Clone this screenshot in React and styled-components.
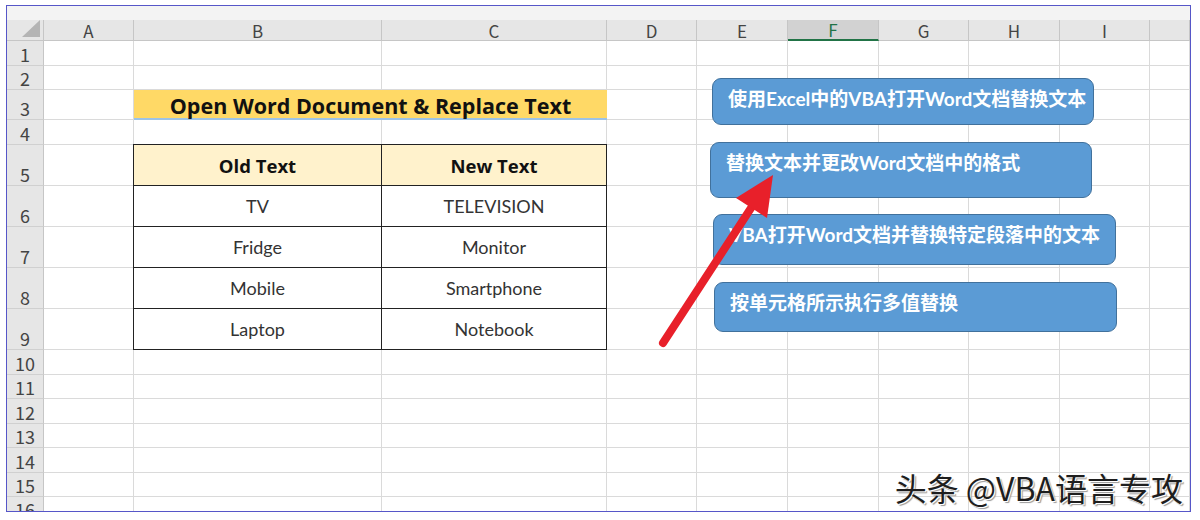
import React from "react";
import styled, { createGlobalStyle } from "styled-components";

const GlobalStyle = createGlobalStyle`
  html, body {
    margin: 0;
    padding: 0;
    background: #ffffff;
  }
  body {
    font-family: "Lato", "Noto Sans CJK SC", sans-serif;
  }
`;

const columns = [
  { name: "A", width: 90 },
  { name: "B", width: 248 },
  { name: "C", width: 225 },
  { name: "D", width: 90 },
  { name: "E", width: 91 },
  { name: "F", width: 91 },
  { name: "G", width: 90 },
  { name: "H", width: 91 },
  { name: "I", width: 90 },
  { name: "", width: 40 },
];

const rowHeights = [25, 24, 30, 25, 41, 41, 41, 41, 41, 24.5, 24.5, 24.5, 24.5, 24.5, 24.5, 24];

const tableRows = [
  ["TV", "TELEVISION"],
  ["Fridge", "Monitor"],
  ["Mobile", "Smartphone"],
  ["Laptop", "Notebook"],
];

const shapes = [
  { text: "使用Excel中的VBA打开Word文档替换文本", x: 712, y: 78, w: 382, h: 47 },
  { text: "替换文本并更改Word文档中的格式", x: 710, y: 142, w: 382, h: 56 },
  { text: "VBA打开Word文档并替换特定段落中的文本", x: 713, y: 214, w: 403, h: 51 },
  { text: "按单元格所示执行多值替换", x: 714, y: 282, w: 403, h: 50 },
];

const App = () => {
  return (
    <>
      <GlobalStyle />
      <Frame>
        <TopStrip />
        <SheetGrid>
          <CornerCell>
            <svg width="18" height="17" viewBox="0 0 18 17">
              <polygon points="18,0 18,17 0,17" fill="#b4b4b4" />
            </svg>
          </CornerCell>
          {columns.map((col, i) => (
            <ColHeader key={i} $col={i + 2} $selected={col.name === "F"}>
              {col.name}
            </ColHeader>
          ))}
          {rowHeights.map((_, r) => (
            <React.Fragment key={r}>
              <RowHeader $row={r + 2}>{r + 1}</RowHeader>
              {columns.map((col, c) => (
                <Cell key={c} $row={r + 2} $col={c + 2} />
              ))}
            </React.Fragment>
          ))}

          <TitleCell>Open Word Document &amp; Replace Text</TitleCell>

          <DataTable>
            <HeadCell>Old Text</HeadCell>
            <HeadCell>New Text</HeadCell>
            {tableRows.map(([oldText, newText], i) => (
              <React.Fragment key={i}>
                <BodyCell>{oldText}</BodyCell>
                <BodyCell>{newText}</BodyCell>
              </React.Fragment>
            ))}
          </DataTable>
        </SheetGrid>

        {shapes.map((s, i) => (
          <Shape
            key={i}
            style={{ left: s.x - 7, top: s.y - 6, width: s.w, height: s.h }}
          >
            {s.text}
          </Shape>
        ))}

        <ArrowLayer viewBox="7 6 1183 505" width="1183" height="505">
          <line
            x1="663"
            y1="343"
            x2="753"
            y2="205"
            stroke="#e8202a"
            strokeWidth="8"
            strokeLinecap="round"
          />
          <polygon points="773,175 736,198 767,218" fill="#e8202a" />
        </ArrowLayer>

        <Watermark>头条 @VBA语言专攻</Watermark>
      </Frame>
    </>
  );
};

const Frame = styled.div`
  position: relative;
  margin: 5px 0 0 6px;
  width: 1183px;
  height: 505px;
  border: 1px solid #5656c8;
  overflow: hidden;
  background: #ffffff;
`;

const TopStrip = styled.div`
  height: 14px;
  background: #f3f3f3;
`;

const SheetGrid = styled.div`
  display: grid;
  grid-template-columns: 37px ${columns.map((c) => `${c.width}px`).join(" ")};
  grid-template-rows: 21px ${rowHeights.map((h) => `${h}px`).join(" ")};
`;

const CornerCell = styled.div`
  grid-row: 1;
  grid-column: 1;
  background: #e6e6e6;
  border-right: 1px solid #c6c6c6;
  border-bottom: 1px solid #c6c6c6;
  display: flex;
  align-items: flex-end;
  justify-content: flex-end;
  padding: 0 3px 3px 0;
  box-sizing: border-box;
`;

const ColHeader = styled.div`
  grid-row: 1;
  grid-column: ${({ $col }) => $col};
  background: ${({ $selected }) => ($selected ? "#d2d2d2" : "#e6e6e6")};
  border-right: 1px solid #c6c6c6;
  border-bottom: ${({ $selected }) => ($selected ? "2px solid #217346" : "1px solid #c6c6c6")};
  box-sizing: border-box;
  display: flex;
  align-items: center;
  justify-content: center;
  font-family: "Noto Sans CJK SC", "Noto Sans", sans-serif;
  font-size: 17px;
  color: ${({ $selected }) => ($selected ? "#217346" : "#444444")};
  line-height: 1;
`;

const RowHeader = styled.div`
  grid-row: ${({ $row }) => $row};
  grid-column: 1;
  background: #e6e6e6;
  border-right: 1px solid #c6c6c6;
  border-bottom: 1px solid #d0d0d0;
  box-sizing: border-box;
  display: flex;
  align-items: flex-end;
  justify-content: center;
  font-family: "Noto Sans CJK SC", "Noto Sans", sans-serif;
  font-size: 18px;
  line-height: 22px;
  color: #444444;
`;

const Cell = styled.div`
  grid-row: ${({ $row }) => $row};
  grid-column: ${({ $col }) => $col};
  border-right: 1px solid #dadada;
  border-bottom: 1px solid #dadada;
  box-sizing: border-box;
`;

const TitleCell = styled.div`
  grid-column: 3 / 5;
  grid-row: 4;
  background: #ffd966;
  border-bottom: 2px solid #9dc3e6;
  box-sizing: border-box;
  display: flex;
  align-items: center;
  justify-content: center;
  font-family: "Open Sans", sans-serif;
  font-weight: 700;
  font-size: 21.5px;
  color: #111111;
  padding-top: 2px;
`;

const DataTable = styled.div`
  grid-column: 3 / 5;
  grid-row: 6 / 11;
  display: grid;
  grid-template-columns: 248px 225px;
  grid-template-rows: repeat(5, 41px);
  margin-top: -1px;
  margin-left: -1px;
  border-top: 1px solid #222222;
  border-left: 1px solid #222222;
  box-sizing: content-box;
  background: #ffffff;
`;

const HeadCell = styled.div`
  background: #fff2cc;
  border-right: 1px solid #222222;
  border-bottom: 1px solid #222222;
  box-sizing: border-box;
  display: flex;
  align-items: center;
  justify-content: center;
  font-family: "Open Sans", sans-serif;
  font-weight: 700;
  font-size: 18.5px;
  color: #111111;
`;

const BodyCell = styled.div`
  border-right: 1px solid #222222;
  border-bottom: 1px solid #222222;
  box-sizing: border-box;
  display: flex;
  align-items: center;
  justify-content: center;
  font-family: "Lato", sans-serif;
  font-size: 18px;
  color: #333333;
`;

const Shape = styled.div`
  position: absolute;
  box-sizing: border-box;
  background: #5b9bd5;
  border: 1.5px solid #41719c;
  border-radius: 9px;
  padding: 6px 14px 0 15px;
  font-family: "Lato", "Noto Sans CJK SC", sans-serif;
  font-weight: 700;
  font-size: 19px;
  line-height: 28px;
  color: #ffffff;
  white-space: nowrap;
`;

const ArrowLayer = styled.svg`
  position: absolute;
  left: 0;
  top: 0;
  pointer-events: none;
`;

const Watermark = styled.div`
  position: absolute;
  right: 7px;
  bottom: 6px;
  font-family: "Noto Sans CJK SC", "Liberation Sans", sans-serif;
  font-size: 32px;
  line-height: 36px;
  color: #1e1e1e;
  text-shadow: 1px 1px 0 #ffffff, 2px 2px 1px #9a9a9a;
`;

export default App;
